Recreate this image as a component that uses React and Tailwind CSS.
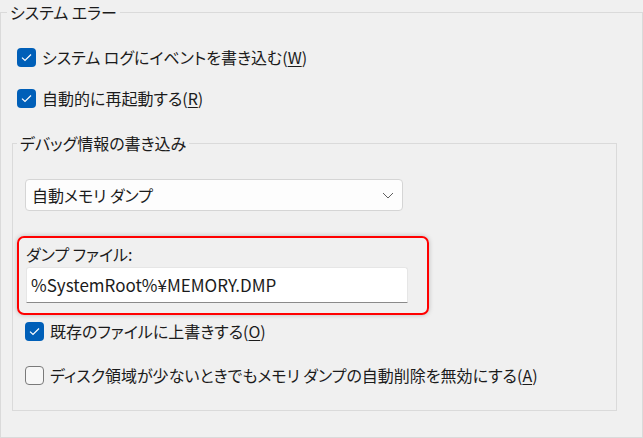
import { useState } from "react"

const font = {
  fontFamily: '"Noto Sans CJK JP", "Noto Sans", sans-serif',
}

function CheckBox({ checked, onChange }) {
  return (
    <span
      onClick={onChange}
      className={
        "flex h-[19px] w-[19px] shrink-0 items-center justify-center rounded-[4px] " +
        (checked ? "bg-[#005fb8]" : "border border-[#7a7a7a] bg-[#f7f7f7]")
      }
    >
      {checked && (
        <svg width="11" height="9" viewBox="0 0 11 9" fill="none">
          <path d="M1 4.6 L4 7.5 L10 1.5" stroke="#fff" strokeWidth="1.2" />
        </svg>
      )}
    </span>
  )
}

// label with one underlined access key in brackets
function Option({ text, keyChar, checked, onChange, className }) {
  return (
    <label className={"flex h-[24px] items-center gap-[6px] " + className}>
      <CheckBox checked={checked} onChange={onChange} />
      <span className="text-[16px] leading-[24px] text-[#1b1b1b]">
        {text}(<span className="underline underline-offset-2">{keyChar}</span>)
      </span>
    </label>
  )
}

export default function App() {
  const [opts, setOpts] = useState({ log: true, restart: true, overwrite: true, disable: false })
  const toggle = (k) => setOpts((p) => ({ ...p, [k]: !p[k] }))

  return (
    <div
      className="h-[438px] w-[643px] overflow-hidden bg-[#f0f0f0] [font-feature-settings:'palt']"
      style={font}
    >
      <fieldset className="h-[438px] w-[643px] border border-[#dadada] pl-[6px]">
        <legend className="px-[3px] text-[16px] leading-[24px] text-[#1b1b1b]">システム エラー</legend>

        <Option
          text="システム ログにイベントを書き込む"
          keyChar="W"
          checked={opts.log}
          onChange={() => toggle("log")}
          className="ml-[10px] mt-[21px]"
        />
        <Option
          text="自動的に再起動する"
          keyChar="R"
          checked={opts.restart}
          onChange={() => toggle("restart")}
          className="ml-[10px] mt-[17px]"
        />

        {/* Debug info group */}
        <fieldset className="ml-[5px] mt-[21px] h-[280px] w-[605px] border border-[#dadada] pl-[4px]">
          <legend className="px-[3px] text-[16px] leading-[24px] text-[#1b1b1b]">デバッグ情報の書き込み</legend>

          <div className="ml-[8px] mt-[24px] flex h-[32px] w-[378px] items-center justify-between rounded-[4px] border border-[#d5d5d5] bg-[#fdfdfd] pl-[6px] pr-[8px]">
            <span className="text-[16px] leading-[24px] text-[#1b1b1b]">自動メモリ ダンプ</span>
            <svg width="12" height="7" viewBox="0 0 12 7" fill="none">
              <path d="M1 1 L6 6 L11 1" stroke="#5f5f5f" strokeWidth="1" />
            </svg>
          </div>

          <div className="mt-[25px] h-[79px] w-[412px] rounded-[7px] border-2 border-[#ff0000] pl-[7px] pt-[4px] shadow-[0_0_5px_rgba(0,0,0,0.22)]">
            <p className="text-[16px] leading-[24px] text-[#1b1b1b]">ダンプ ファイル:</p>
            <div className="mt-[1px] flex h-[36px] w-[382px] items-center rounded-t-[3px] border border-b-[#8a8a8a] border-[#e6e6e6] bg-white pl-[4px]">
              <span className="text-[17px] leading-[24px] text-[#1b1b1b]">%SystemRoot%¥MEMORY.DMP</span>
            </div>
          </div>

          <Option
            text="既存のファイルに上書きする"
            keyChar="O"
            checked={opts.overwrite}
            onChange={() => toggle("overwrite")}
            className="ml-[8px] mt-[4px]"
          />
          <Option
            text="ディスク領域が少ないときでもメモリ ダンプの自動削除を無効にする"
            keyChar="A"
            checked={opts.disable}
            onChange={() => toggle("disable")}
            className="ml-[8px] mt-[20px]"
          />
        </fieldset>
      </fieldset>
    </div>
  )
}
